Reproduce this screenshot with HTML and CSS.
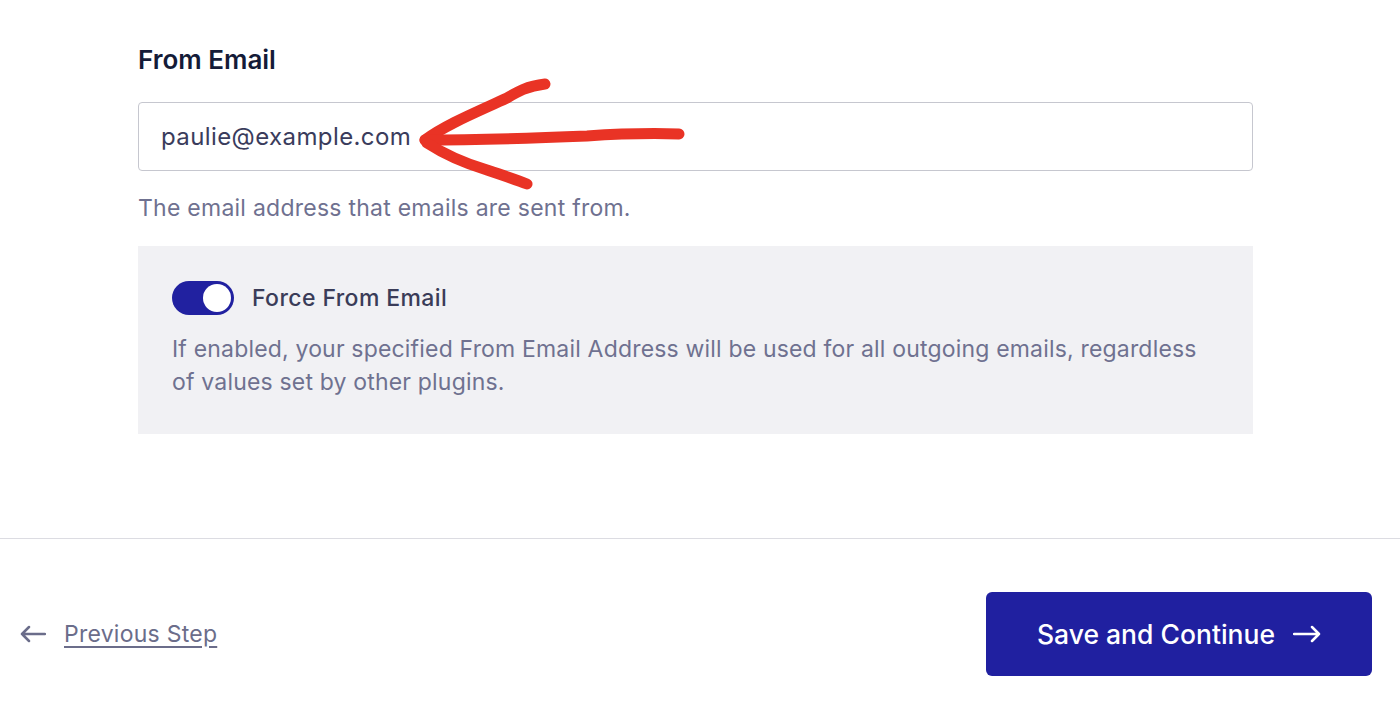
FILE: index.html
```html
<!DOCTYPE html>
<html lang="en">
<head>
<meta charset="UTF-8" />
<meta name="viewport" content="width=device-width, initial-scale=1.0"/>
<title>From Email</title>
<link rel="stylesheet" href="styles.css">
</head>
<body>
<div class="section">
  <div class="field">
    <label class="label" for="from-email">From Email</label>
    <div class="input-wrap">
      <input id="from-email" class="input" type="text" value="paulie@example.com">
      <svg class="scribble" width="280" height="120" viewBox="0 0 280 120">
        <path d="M128 8 C110 10 100 16 90 22 C60 36 30 48 8 64" />
        <path d="M8 64 C60 64 120 62 170 60 C200 58 230 57 262 58" />
        <path d="M10 67 C30 80 50 88 70 94 C85 99 100 104 110 108" />
      </svg>
    </div>
    <p class="help">The email address that emails are sent from.</p>
  </div>

  <div class="panel">
    <div class="toggle-row">
      <span class="toggle"><span class="knob"></span></span>
      <span class="toggle-label">Force From Email</span>
    </div>
    <p class="panel-text">If enabled, your specified From Email Address will be used for all outgoing emails, regardless of values set by other plugins.</p>
  </div>
</div>

<div class="footer">
  <a class="prev" href="#">
    <svg width="26" height="18" viewBox="0 0 26 18"><path d="M25 9 H2 M9 2 L2 9 L9 16" /></svg>
    <span>Previous Step</span>
  </a>
  <button class="save">
    Save and Continue
    <svg width="28" height="18" viewBox="0 0 28 18"><path d="M1 9 H26 M19 2 L26 9 L19 16" /></svg>
  </button>
</div>
</body>
</html>
```

FILE: styles.css
```css
body {
  margin: 0;
  background: #fff;
  font-family: Inter, "Noto Sans", sans-serif;
  color: #2c2e4a;
}

.section {
  padding: 45px 0 0 138px;
  width: 1115px;
}

.label {
  display: block;
  font-size: 26px;
  line-height: 30px;
  font-weight: 600;
  color: #141b38;
  margin-bottom: 27px;
}

.input-wrap {
  position: relative;
}

.input {
  box-sizing: border-box;
  width: 100%;
  height: 69px;
  border: 1px solid #c6c7cf;
  border-radius: 4px;
  padding: 0 22px;
  font-family: inherit;
  font-size: 24px;
  letter-spacing: 0.4px;
  color: #3a3c5c;
  background: #fff;
}

.scribble {
  position: absolute;
  left: 279px;
  top: -26px;
  fill: none;
  stroke: #e93325;
  stroke-width: 11;
  stroke-linecap: round;
  stroke-linejoin: round;
}

.help {
  margin: 23px 0 0;
  font-size: 23px;
  letter-spacing: 0.25px;
  line-height: 28px;
  color: #6f7190;
}

.panel {
  margin-top: 24px;
  background: #f1f1f4;
  padding: 35px 34px 35px;
}

.toggle-row {
  display: flex;
  align-items: center;
  gap: 18px;
}

.toggle {
  box-sizing: border-box;
  width: 62px;
  height: 34px;
  border-radius: 17px;
  background: #2121a0;
  padding: 3px;
  display: flex;
  justify-content: flex-end;
}

.knob {
  width: 28px;
  height: 28px;
  border-radius: 50%;
  background: #fff;
}

.toggle-label {
  font-size: 23px;
  letter-spacing: 0.4px;
  font-weight: 500;
  color: #3a3c58;
}

.panel-text {
  margin: 18px 0 0;
  font-size: 23px;
  letter-spacing: 0.18px;
  line-height: 33px;
  color: #6f7190;
}

.footer {
  margin-top: 104px;
  border-top: 1px solid #dcdce2;
  padding: 53px 28px 34px 20px;
  display: flex;
  justify-content: space-between;
  align-items: center;
}

.prev {
  display: flex;
  align-items: center;
  gap: 18px;
  color: #6b6d8a;
  font-size: 23px;
  letter-spacing: 0.25px;
  text-underline-offset: 4px;
}

.prev svg path {
  fill: none;
  stroke: #6b6d8a;
  stroke-width: 2.5;
  stroke-linecap: round;
  stroke-linejoin: round;
}

.save {
  width: 386px;
  height: 84px;
  border: none;
  border-radius: 6px;
  background: #2020a0;
  color: #fff;
  font-family: inherit;
  font-size: 26.5px;
  font-weight: 500;
  display: flex;
  align-items: center;
  justify-content: center;
  gap: 18px;
  cursor: pointer;
}

.save svg path {
  fill: none;
  stroke: #fff;
  stroke-width: 2.5;
  stroke-linecap: round;
  stroke-linejoin: round;
}
```
